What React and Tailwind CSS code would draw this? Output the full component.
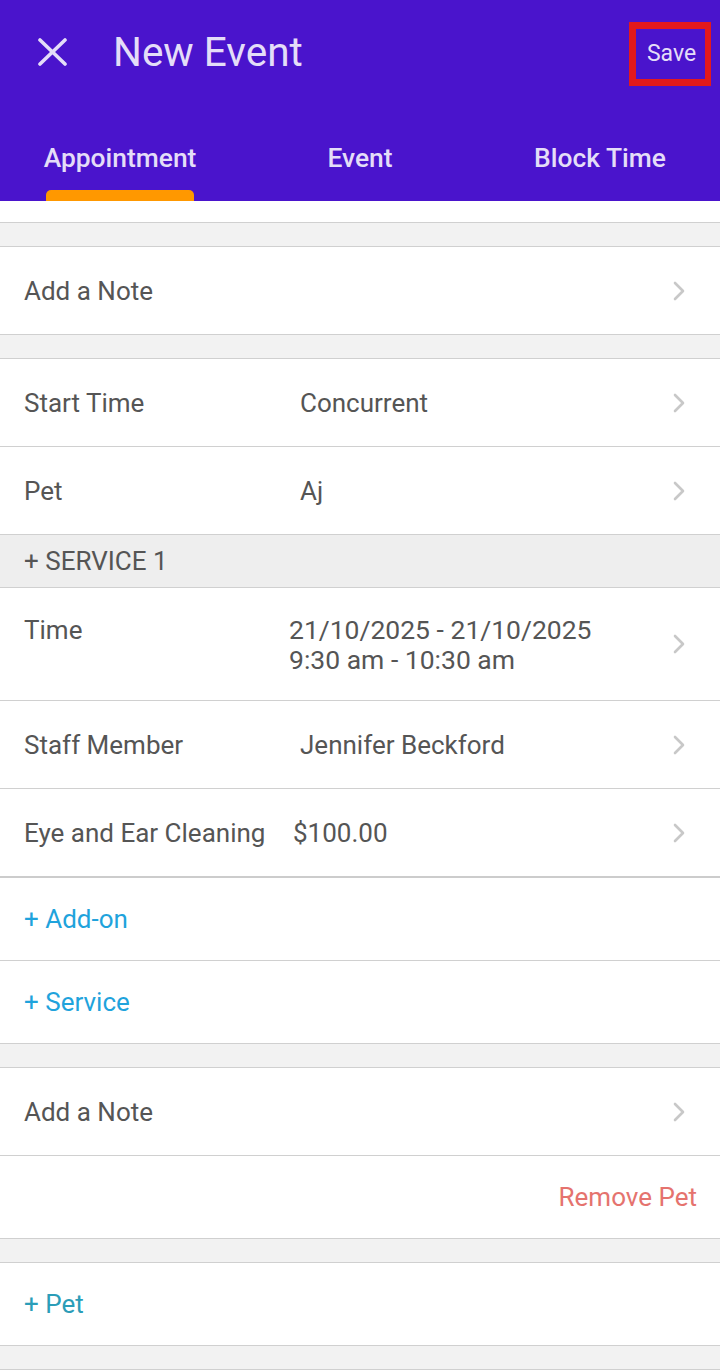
import React from "react";

const Chevron = () => (
  <svg width="14" height="22" viewBox="0 0 14 22" className="shrink-0">
    <polyline points="3,3 11,11 3,19" fill="none" stroke="#c8c8c8" strokeWidth="2.6" strokeLinecap="round" strokeLinejoin="round" />
  </svg>
);

const Gray = ({ h = "h-[24px]" }) => <div className={`${h} bg-[#f2f2f2] border-b border-[#d0d0d0]`} />;

const Row = ({ label, value, valueClass = "", h = "h-[88px]" }) => (
  <div className={`${h} flex items-center border-b border-[#d0d0d0] bg-white pl-[24px] pr-[34px]`}>
    <div className="w-[276px] shrink-0 text-[#555555]">{label}</div>
    <div className={`flex-1 text-[#555555] ${valueClass}`}>{value}</div>
    <Chevron />
  </div>
);

export default function App() {
  return (
    <div className="w-[720px] min-h-[1371px] bg-white text-[26px] leading-[30px]" style={{ fontFamily: "Roboto, 'Noto Sans', sans-serif" }}>
      {/* Header */}
      <div className="bg-[#4a14cc] h-[201px] flex flex-col">
        <div className="h-[104px] flex items-center pl-[38px] pr-[9px]">
          <svg width="29" height="28" viewBox="0 0 29 28" className="shrink-0">
            <line x1="2" y1="2" x2="27" y2="26" stroke="#e4ddf8" strokeWidth="3.6" strokeLinecap="round" />
            <line x1="27" y1="2" x2="2" y2="26" stroke="#e4ddf8" strokeWidth="3.6" strokeLinecap="round" />
          </svg>
          <div className="ml-[46px] text-[40.5px] leading-[48px] text-[#e4ddf8]">New Event</div>
          <div className="ml-auto mt-[4px] w-[82px] h-[64px] border-[7px] border-r-[6px] border-[#e3191c] flex items-center justify-center text-[23px] text-[#e4ddf8] pl-[2px]">
            Save
          </div>
        </div>
        <div className="flex-1 grid grid-cols-3">
          {[
            { t: "Appointment", active: true },
            { t: "Event" },
            { t: "Block Time" },
          ].map((tab) => (
            <div key={tab.t} className="flex flex-col items-center justify-end">
              <div className="text-[26.4px] font-medium text-[#e4ddf8] leading-[30px] mb-[17px]">{tab.t}</div>
              <div className={`w-[148px] h-[11px] rounded-t-[5px] ${tab.active ? "bg-[#ff9800]" : "bg-transparent"}`} />
            </div>
          ))}
        </div>
      </div>

      {/* Content */}
      <div className="h-[22px] bg-white border-b border-[#d0d0d0]" />
      <Gray />
      <Row label="Add a Note" value="" />
      <Gray />
      <Row label="Start Time" value="Concurrent" />
      <Row label="Pet" value="Aj" />
      <div className="h-[53px] bg-[#eeeeee] border-b border-[#d0d0d0] flex items-center pl-[24px] text-[#555555] text-[26px]">
        + SERVICE 1
      </div>
      <div className="h-[113px] flex items-center border-b border-[#d0d0d0] bg-white pl-[24px] pr-[34px]">
        <div className="w-[276px] shrink-0 self-start pt-[27px] text-[#555555]">Time</div>
        <div className="flex-1 self-start pt-[27px] -ml-[11px] text-[#555555] text-[26.5px]">
          <div>21/10/2025 - 21/10/2025</div>
          <div>9:30 am - 10:30 am</div>
        </div>
        <Chevron />
      </div>
      <Row label="Staff Member" value="Jennifer Beckford" />
      <div className="h-[89px] flex items-center border-b-2 border-[#cccccc] bg-white pl-[24px] pr-[34px]">
        <div className="w-[269px] shrink-0 text-[#555555] whitespace-nowrap">Eye and Ear Cleaning</div>
        <div className="flex-1 text-[#555555]">$100.00</div>
        <Chevron />
      </div>
      <div className="h-[83px] flex items-center border-b border-[#d0d0d0] bg-white pl-[24px] text-[#1fa3dc]">+ Add-on</div>
      <div className="h-[83px] flex items-center border-b border-[#d0d0d0] bg-white pl-[24px] text-[#1fa3dc]">+ Service</div>
      <Gray />
      <Row label="Add a Note" value="" />
      <div className="h-[83px] flex items-center justify-end border-b border-[#d0d0d0] bg-white pr-[23px] text-[#e5736e]">Remove Pet</div>
      <Gray />
      <div className="h-[83px] flex items-center border-b border-[#d0d0d0] bg-white pl-[24px] text-[#2b9db8]">+ Pet</div>
      <Gray h="h-[24px]" />
    </div>
  );
}
